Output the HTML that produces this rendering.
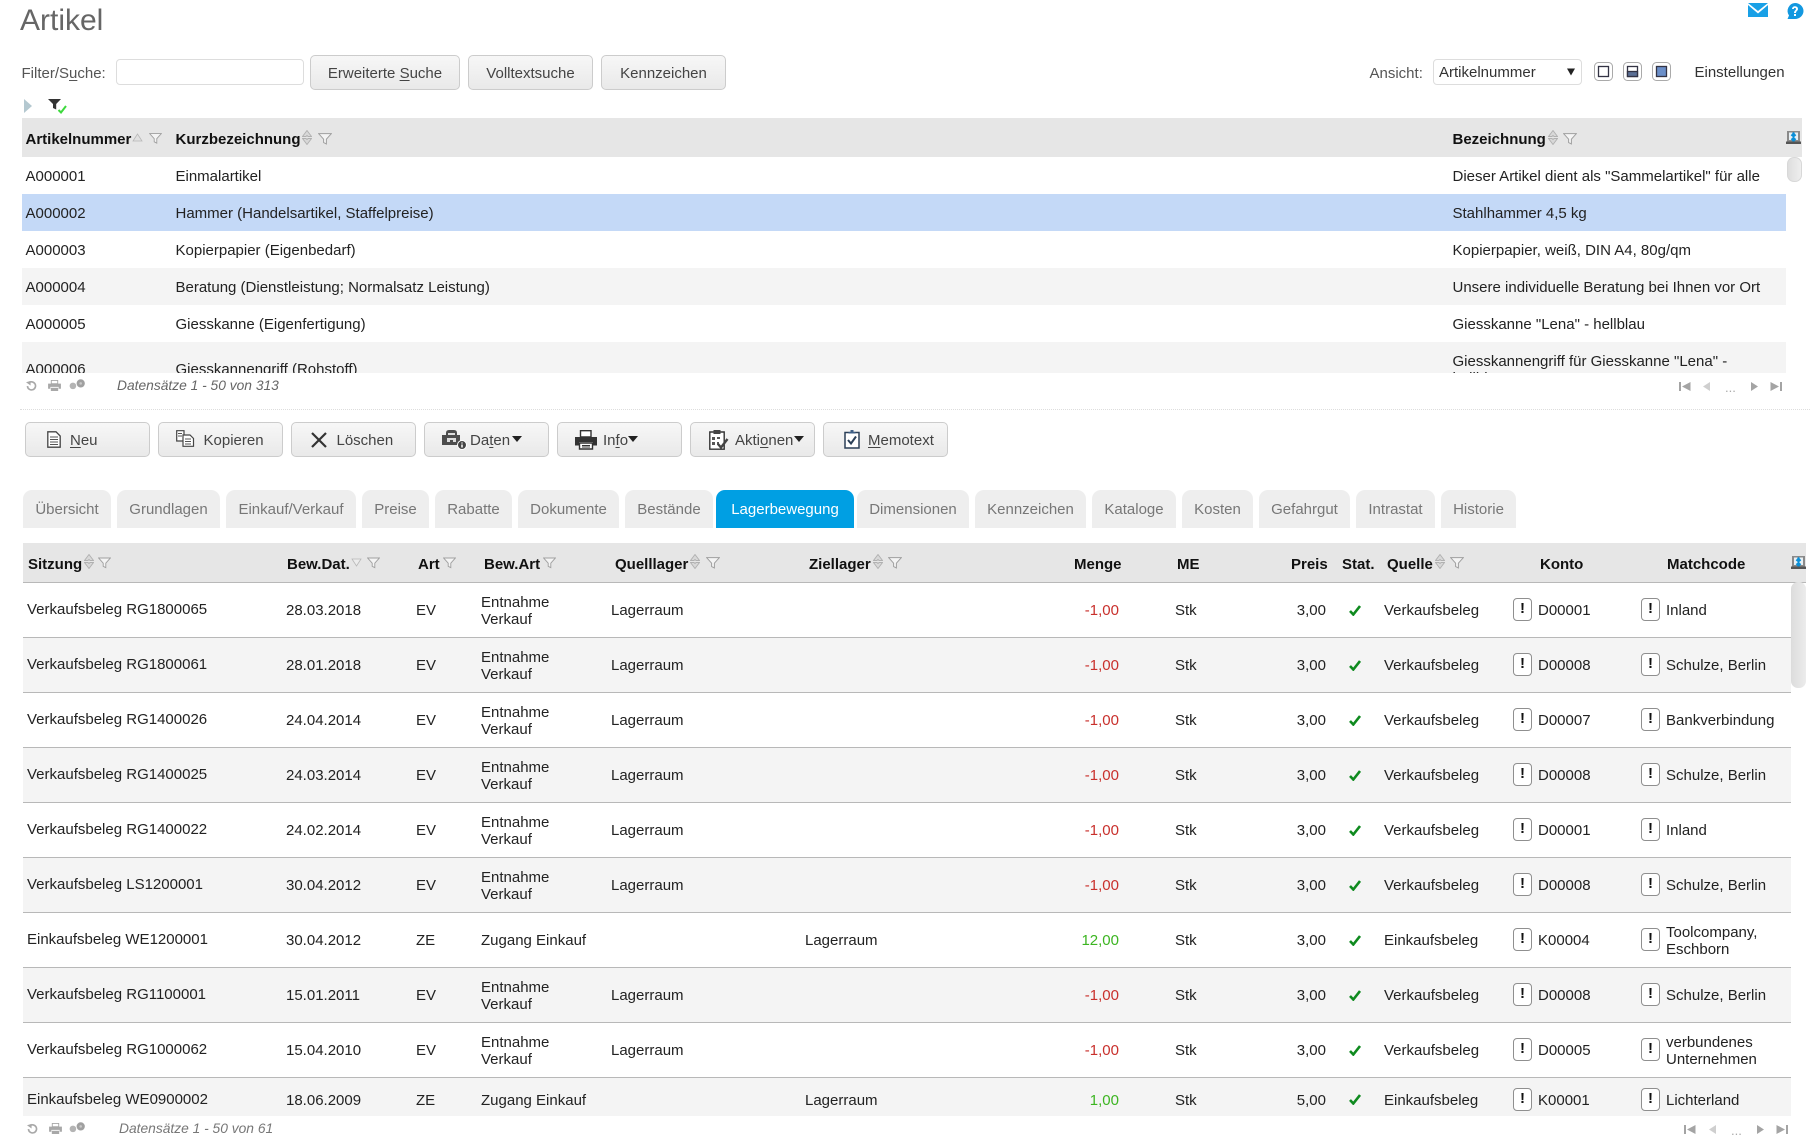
<!DOCTYPE html>
<html lang="de"><head><meta charset="utf-8"><title>Artikel</title>
<style>
*{box-sizing:border-box}
html,body{margin:0;padding:0;background:#fff}
body{width:1814px;height:1147px;position:relative;overflow:hidden;font:15px/17px "Liberation Sans",sans-serif;color:#222}
.a{position:absolute;white-space:nowrap}
svg{position:absolute;overflow:visible}
.btn{position:absolute;border:1px solid #ccc;border-radius:5px;background:linear-gradient(#f7f7f7,#e9e9e9);color:#444;text-align:center;white-space:nowrap}
.top{height:35px;top:55px;line-height:35px}
.b2{top:422px;height:35px;width:125px;line-height:35px;text-align:left}
.b2 span{position:absolute;top:0}
u{text-underline-offset:2px}
#t1{position:absolute;left:22px;top:157px;width:1764px;height:216px;overflow:hidden}
#t1 div.r{position:absolute;left:0;width:1764px;height:37px;line-height:39px}
#t1 span{position:absolute;top:0}
.s1{left:3.5px}.s2{left:153.5px}.s3{left:1430.5px}
.hd{position:absolute;background:#e6e6e6}
.hd b,.hb{position:absolute;color:#111;font-weight:bold;white-space:nowrap}
.tab{position:absolute;top:490px;height:38px;background:#eee;border-radius:9px 9px 0 0;color:#777;line-height:40px;text-align:center;white-space:nowrap}
.on{background:#009fe3;color:#fff}
#t2{position:absolute;left:23px;top:583px;width:1768px;height:533px;overflow:hidden}
.w{position:absolute;left:0;width:1768px;height:55px;border-bottom:1px solid #b8b8b8;line-height:55px}
.g{background:#f4f4f4}
.w>span{position:absolute;top:0;white-space:nowrap}
.w .k{top:-1px;left:4px}.w .d{left:263px}.w .e{left:393px}
.w .f{left:458px;top:11px;line-height:17px}
.w .q{left:588px}.w .z{left:782px}
.w .m{right:672px;color:#c9302c}.w .m.p{color:#3cb521}
.w .u{left:1152px}.w .x{right:465px}
.w .o{left:1361px}.w .l{left:1515px}.w .n{left:1643px}
.w .two{left:1643px;top:11px;line-height:17px}
.w .i,.w .j{top:15px;width:19px;height:23px;border:1px solid #8f8f8f;border-radius:4px;background:#fff;line-height:19px;text-align:center;font-weight:bold;color:#111}
.w .i{left:1490px}.w .j{left:1618px}
.last{height:44px;border:0;line-height:46px}
.last .i,.last .j{top:10px}
.ck{position:absolute;left:1326px;top:22px}
.last .ck{top:16px}
</style></head><body>
<svg width="0" height="0" style="position:absolute"><defs>
<symbol id="so" viewBox="0 0 10 15"><path d="M5 .5L9.5 6.5H6L5 5.5 4 6.5H.5zM.5 8.5H4L5 9.5 6 8.5H9.5L5 14.500z" fill="#d8d8d8" stroke="#b0b0b0" stroke-width=".9"/></symbol>
<symbol id="fi" viewBox="0 0 14 12"><path d="M.6.6H13.4L8.4 6.2V11L5.6 9.6V6.2z" fill="#f4f4f4" stroke="#a0a0a0" stroke-width="1"/></symbol>
<symbol id="st" viewBox="0 0 15 13"><path d="M1 0H14V12H1z" fill="#8a8a8a"/><path d="M3 1.500H12V9H3z" fill="#e8f0f4"/><path d="M7.5 1.500V10M5.500 5L7.500 2.500 9.500 5M5.500 7.500L7.500 10 9.500 7.500" fill="none" stroke="#0a8fd8" stroke-width="2"/><path d="M0 10.500H15V13H0z" fill="#555"/></symbol>
<symbol id="ref" viewBox="0 0 12 12"><path d="M3.2 3A4.4 4.4 0 1 1 1.6 6.6" fill="none" stroke="#a8a8a8" stroke-width="1.8"/><path d="M0 2.5L5 1V6z" fill="#a8a8a8"/></symbol>
<symbol id="pr" viewBox="0 0 14 12"><path d="M3.5.5H10.5V4H3.5z" fill="#fff" stroke="#a8a8a8"/><path d="M0 4H14V9.5H11.5V7.5H2.5V9.5H0z" fill="#a8a8a8"/><path d="M3 8.500H11V12H3z" fill="#a8a8a8"/></symbol>
<symbol id="ge" viewBox="0 0 18 12"><circle cx="4" cy="7.5" r="3.6" fill="#b4b4b4"/><circle cx="12.5" cy="4.8" r="4.5" fill="#a0a0a0"/><circle cx="12.5" cy="4.8" r="1.4" fill="#c8c8c8"/></symbol>
<symbol id="fi1" viewBox="0 0 12 9"><path d="M0 0V9H2V0zM11.5 0L3 4.5 11.5 9z" fill="#a4a4a4"/></symbol>
<symbol id="pv" viewBox="0 0 7 9"><path d="M7 0V9L0 4.5z" fill="#cfcfcf"/></symbol>
<symbol id="nx" viewBox="0 0 7 9"><path d="M0 0V9L7 4.5z" fill="#a4a4a4"/></symbol>
<symbol id="la" viewBox="0 0 12 9"><path d="M10 0V9H12V0zM.5 0L9 4.5.5 9z" fill="#a4a4a4"/></symbol>
<symbol id="ok" viewBox="0 0 12 11"><path d="M1 6L4.3 9.5 11 1" fill="none" stroke="#0f8a1f" stroke-width="2.6"/></symbol>
</defs></svg>

<div class="a" style="left:20px;top:3px;font-size:30px;line-height:36px;color:#666">Artikel</div>
<svg style="left:1748px;top:3px" width="20" height="14" viewBox="0 0 20 14"><path d="M0 0H20L10 8z" fill="#19a0e6"/><path d="M0 2V14H20V2L10 10.5z" fill="#19a0e6"/></svg>
<svg style="left:1785px;top:3px" width="19" height="16" viewBox="0 0 19 16"><path d="M10 0A8.5 8 0 0 1 10 16H2.5L4 12.5A8 8 0 0 1 10 0z" fill="#1398e0"/><path d="M10.2 3.2A2.8 2.8 0 0 1 13 6C13 7.6 11 8 11 10H9C9 7.6 11 7.2 11 6A1 1 0 0 0 8.8 6H7A3 3 0 0 1 10.2 3.2zM9 11H11V13H9z" fill="#fff"/></svg>

<div class="a" style="left:21.5px;top:65px;color:#555">Filter/S<u>u</u>che:</div>
<div class="a" style="left:116px;top:59px;width:188px;height:26px;border:1px solid #ddd;border-radius:4px;background:#fff"></div>
<div class="btn top" style="left:310px;width:150px">Erweiterte <u>S</u>uche</div>
<div class="btn top" style="left:468px;width:125px">Volltextsuche</div>
<div class="btn top" style="left:601px;width:125px">Kennzeichen</div>

<div class="a" style="left:1369.5px;top:65px;color:#555">Ansicht:</div>
<div class="a" style="left:1433px;top:59px;width:149px;height:26px;border:1px solid #ddd;border-radius:4px;line-height:26px;padding-left:5px;color:#333">Artikelnummer</div>
<svg style="left:1567px;top:68px" width="8" height="8" viewBox="0 0 9 8"><path d="M0 0H9L4.500 8z" fill="#222"/></svg>
<svg style="left:1594px;top:62px" width="19" height="19" viewBox="0 0 19 19"><rect x=".5" y=".5" width="18" height="18" rx="4" fill="#fff" stroke="#aaa"/><rect x="4.500" y="4.500" width="10" height="10" fill="#fff" stroke="#334" stroke-width="1.300"/></svg>
<svg style="left:1623px;top:62px" width="19" height="19" viewBox="0 0 19 19"><rect x=".5" y=".5" width="18" height="18" rx="4" fill="#fff" stroke="#aaa"/><rect x="4.500" y="4.500" width="10" height="10" fill="#fff" stroke="#334" stroke-width="1.300"/><rect x="4.500" y="9.500" width="10" height="5" fill="#5b6f95" stroke="#334" stroke-width="1.300"/></svg>
<svg style="left:1652px;top:62px" width="19" height="19" viewBox="0 0 19 19"><rect x=".5" y=".5" width="18" height="18" rx="4" fill="#fff" stroke="#aaa"/><rect x="4.500" y="4.500" width="10" height="10" fill="#6b8fc9" stroke="#334" stroke-width="1.300"/></svg>
<div class="a" style="left:1694.5px;top:64px;color:#333">Einstellungen</div>

<svg style="left:24px;top:99px" width="8" height="14" viewBox="0 0 8 14"><path d="M0 0L8 7 0 14z" fill="#b4c8d0"/></svg>
<svg style="left:48px;top:99px" width="20" height="16" viewBox="0 0 20 16"><path d="M0 0H13L8.200 5V10.500L5 9V5z" fill="#333"/><path d="M10.500 11L13 13.500 18 7" fill="none" stroke="#3dd93d" stroke-width="2"/></svg>

<div class="hd" style="left:22px;top:118px;width:1780px;height:39px"></div>
<div class="hb" style="left:25.5px;top:131px">Artikelnummer</div>
<svg style="left:133px;top:133px" width="9" height="10" viewBox="0 0 9 10"><path d="M4.500 1L9 8H0z" fill="#e0e0e0" stroke="#b8b8b8" stroke-width=".8"/></svg>
<svg style="left:149px;top:133px" width="13" height="11"><use href="#fi"/></svg>
<div class="hb" style="left:175.5px;top:131px">Kurzbezeichnung</div>
<svg style="left:302px;top:130px" width="10" height="15"><use href="#so"/></svg>
<svg style="left:318px;top:133px" width="14" height="12"><use href="#fi"/></svg>
<div class="hb" style="left:1452.5px;top:131px">Bezeichnung</div>
<svg style="left:1548px;top:130px" width="10" height="15"><use href="#so"/></svg>
<svg style="left:1563px;top:133px" width="14" height="12"><use href="#fi"/></svg>
<svg style="left:1786px;top:131px" width="15" height="13"><use href="#st"/></svg>

<div id="t1">
<div class="r" style="top:0"><span class="s1">A000001</span><span class="s2">Einmalartikel</span><span class="s3">Dieser Artikel dient als "Sammelartikel" für alle</span></div>
<div class="r" style="top:37px;background:#c4d9f7"><span class="s1">A000002</span><span class="s2">Hammer (Handelsartikel, Staffelpreise)</span><span class="s3">Stahlhammer 4,5 kg</span></div>
<div class="r" style="top:74px"><span class="s1">A000003</span><span class="s2">Kopierpapier (Eigenbedarf)</span><span class="s3">Kopierpapier, weiß, DIN A4, 80g/qm</span></div>
<div class="r" style="top:111px;background:#f4f4f4"><span class="s1">A000004</span><span class="s2">Beratung (Dienstleistung; Normalsatz Leistung)</span><span class="s3">Unsere individuelle Beratung bei Ihnen vor Ort</span></div>
<div class="r" style="top:148px"><span class="s1">A000005</span><span class="s2">Giesskanne (Eigenfertigung)</span><span class="s3">Giesskanne "Lena" - hellblau</span></div>
<div class="r" style="top:185px;height:53px;line-height:53px;background:#f4f4f4"><span class="s1" style="top:1px">A000006</span><span class="s2" style="top:1px">Giesskannengriff (Rohstoff)</span><span class="s3" style="top:11px;line-height:17px">Giesskannengriff für Giesskanne "Lena" -<br>hellblau</span></div>
</div>
<div style="position:absolute;left:1787px;top:157px;width:15px;height:25px;border-radius:7px;background:linear-gradient(90deg,#dedede,#eeeeee);border:1px solid #d8d8d8"></div>

<svg style="left:26px;top:380px" width="11" height="11"><use href="#ref"/></svg>
<svg style="left:48px;top:380px" width="13" height="11"><use href="#pr"/></svg>
<svg style="left:69px;top:379px" width="17" height="11"><use href="#ge"/></svg>
<div class="a" style="left:117px;top:377px;font-style:italic;color:#666;font-size:13.800px">Datensätze 1 - 50 von 313</div>
<svg style="left:1679px;top:382px" width="12" height="9"><use href="#fi1"/></svg>
<svg style="left:1703px;top:382px" width="7" height="9"><use href="#pv"/></svg>
<div class="a" style="left:1725px;top:379px;color:#aaa;font-size:13px">...</div>
<svg style="left:1751px;top:382px" width="7" height="9"><use href="#nx"/></svg>
<svg style="left:1770px;top:382px" width="12" height="9"><use href="#la"/></svg>

<div style="position:absolute;left:20px;top:409px;width:1790px;border-top:1px dotted #ddd"></div>

<div class="btn b2" style="left:25px"><span style="left:44px"><u>N</u>eu</span>
<svg style="left:21px;top:8px" width="14" height="17" viewBox="0 0 14 17"><path d="M.8.8H9L13.200 5V16.200H.8z" fill="#fff" stroke="#444" stroke-width="1.300"/><path d="M3 6H11M3 8.500H11M3 11H11M3 13.500H11" stroke="#555"/></svg></div>
<div class="btn b2" style="left:158px"><span style="left:44.5px">Kopieren</span>
<svg style="left:17px;top:7px" width="19" height="17" viewBox="0 0 19 17"><path d="M.7.7H8V11H.7z" fill="#fff" stroke="#444" stroke-width="1.200"/><path d="M7 5H14L17.500 8.500V16.300H7z" fill="#fff" stroke="#444" stroke-width="1.200"/><path d="M2 3.500H6M2 6H6M9 9H15M9 11.500H15M9 14H15" stroke="#555"/></svg></div>
<div class="btn b2" style="left:291px"><span style="left:44.5px">Löschen</span>
<svg style="left:19px;top:9px" width="16" height="16" viewBox="0 0 16 16"><path d="M1 1L15 15M15 1L1 15" stroke="#333" stroke-width="2.200"/></svg></div>
<div class="btn b2" style="left:424px"><span style="left:45px">Da<u>t</u>en</span>
<svg style="left:17px;top:7px" width="25" height="20" viewBox="0 0 25 20"><path d="M4 3Q4 0 7 0H12Q15 0 15 3V5H18V15H0V5H4z" fill="#4d4d4d"/><path d="M6 3H13V5H6zM5 8H14V12H11V10H8V12H5z" fill="#ddd"/><circle cx="20" cy="15" r="4.500" fill="#444" stroke="#fff"/><path d="M20 12.500V13.500M20 14.500V17.500" stroke="#fff" stroke-width="1.500"/></svg>
<svg style="left:87px;top:13px" width="10" height="6" viewBox="0 0 10 6"><path d="M0 0H10L5 6z" fill="#222"/></svg></div>
<div class="btn b2" style="left:557px"><span style="left:45px">In<u>f</u>o</span>
<svg style="left:17px;top:7px" width="22" height="20" viewBox="0 0 22 20"><path d="M5.500 .7H16V7H5.500z" fill="#fff" stroke="#333" stroke-width="1.400"/><path d="M0 7H22V15.500H18V12H4V15.500H0z" fill="#333"/><path d="M4.500 13H17.500V19H4.500z" fill="#fff" stroke="#333" stroke-width="1.400"/><path d="M7 15.500H15M7 17H15" stroke="#333"/></svg>
<svg style="left:70px;top:13px" width="10" height="6" viewBox="0 0 10 6"><path d="M0 0H10L5 6z" fill="#222"/></svg></div>
<div class="btn b2" style="left:690px"><span style="left:44px">Akti<u>o</u>nen</span>
<svg style="left:18px;top:6px" width="20" height="21" viewBox="0 0 20 21"><path d="M.8 3H15.200V20.200H.8z" fill="#fff" stroke="#333" stroke-width="1.400"/><path d="M4.500 1H11.500V5H4.500z" fill="#444"/><path d="M3 8H6V11H3zM3 13H6V16H3zM8 8H11V10H8zM8 13H10V16H8z" fill="#555"/><path d="M9 15L12 18.500 18.500 10" fill="none" stroke="#444" stroke-width="2.400"/></svg>
<svg style="left:103px;top:13px" width="10" height="6" viewBox="0 0 10 6"><path d="M0 0H10L5 6z" fill="#222"/></svg></div>
<div class="btn b2" style="left:823px"><span style="left:44px"><u>M</u>emotext</span>
<svg style="left:20px;top:6px" width="16" height="20" viewBox="0 0 16 20"><path d="M1 3.500H15V19H1z" fill="#fff" stroke="#2b3f57" stroke-width="1.500"/><path d="M4.500 4.500V3H6.500V1H9.500V3H11.500V4.500z" fill="#3f5f86"/><path d="M4 11L7 14.500 12 7.500" fill="none" stroke="#2b3f57" stroke-width="2"/></svg></div>

<div class="tab" style="left:23px;width:88px">Übersicht</div>
<div class="tab" style="left:117px;width:103px">Grundlagen</div>
<div class="tab" style="left:226px;width:130px">Einkauf/Verkauf</div>
<div class="tab" style="left:362px;width:67px">Preise</div>
<div class="tab" style="left:435px;width:77px">Rabatte</div>
<div class="tab" style="left:518px;width:101px">Dokumente</div>
<div class="tab" style="left:625px;width:88px">Bestände</div>
<div class="tab on" style="left:716px;width:138px">Lagerbewegung</div>
<div class="tab" style="left:857px;width:112px">Dimensionen</div>
<div class="tab" style="left:975px;width:111px">Kennzeichen</div>
<div class="tab" style="left:1092px;width:84px">Kataloge</div>
<div class="tab" style="left:1182px;width:71px">Kosten</div>
<div class="tab" style="left:1259px;width:91px">Gefahrgut</div>
<div class="tab" style="left:1356px;width:79px">Intrastat</div>
<div class="tab" style="left:1441px;width:75px">Historie</div>

<div class="hd" style="left:23px;top:543px;width:1783px;height:40px;border-bottom:1px solid #b8b8b8"></div>
<div class="hb" style="left:28px;top:556px">Sitzung</div>
<svg style="left:84px;top:554px" width="10" height="15"><use href="#so"/></svg>
<svg style="left:98px;top:557px" width="13" height="12"><use href="#fi"/></svg>
<div class="hb" style="left:287px;top:556px">Bew.Dat.</div>
<svg style="left:352px;top:558px" width="9" height="9" viewBox="0 0 9 9"><path d="M0 1H9L4.500 8z" fill="#ececec" stroke="#b8b8b8" stroke-width=".8"/></svg>
<svg style="left:367px;top:557px" width="13" height="12"><use href="#fi"/></svg>
<div class="hb" style="left:418px;top:556px">Art</div>
<svg style="left:443px;top:557px" width="13" height="12"><use href="#fi"/></svg>
<div class="hb" style="left:484px;top:556px">Bew.Art</div>
<svg style="left:543px;top:557px" width="13" height="12"><use href="#fi"/></svg>
<div class="hb" style="left:615px;top:556px">Quelllager</div>
<svg style="left:690px;top:554px" width="10" height="15"><use href="#so"/></svg>
<svg style="left:706px;top:557px" width="14" height="12"><use href="#fi"/></svg>
<div class="hb" style="left:809px;top:556px">Ziellager</div>
<svg style="left:873px;top:554px" width="10" height="15"><use href="#so"/></svg>
<svg style="left:888px;top:557px" width="14" height="12"><use href="#fi"/></svg>
<div class="hb" style="left:1074px;top:556px">Menge</div>
<div class="hb" style="left:1177px;top:556px">ME</div>
<div class="hb" style="left:1291px;top:556px">Preis</div>
<div class="hb" style="left:1342px;top:556px">Stat.</div>
<div class="hb" style="left:1387px;top:556px">Quelle</div>
<svg style="left:1435px;top:554px" width="10" height="15"><use href="#so"/></svg>
<svg style="left:1450px;top:557px" width="14" height="12"><use href="#fi"/></svg>
<div class="hb" style="left:1540px;top:556px">Konto</div>
<div class="hb" style="left:1667px;top:556px">Matchcode</div>
<svg style="left:1791px;top:556px" width="15" height="13"><use href="#st"/></svg>

<div id="t2">
<div class="w" style="top:0"><span class="k">Verkaufsbeleg RG1800065</span><span class="d">28.03.2018</span><span class="e">EV</span><span class="f">Entnahme<br>Verkauf</span><span class="q">Lagerraum</span><span class="m">-1,00</span><span class="u">Stk</span><span class="x">3,00</span><svg class="ck" width="12" height="11"><use href="#ok"/></svg><span class="o">Verkaufsbeleg</span><span class="i">!</span><span class="l">D00001</span><span class="j">!</span><span class="n">Inland</span></div>
<div class="w g" style="top:55px"><span class="k">Verkaufsbeleg RG1800061</span><span class="d">28.01.2018</span><span class="e">EV</span><span class="f">Entnahme<br>Verkauf</span><span class="q">Lagerraum</span><span class="m">-1,00</span><span class="u">Stk</span><span class="x">3,00</span><svg class="ck" width="12" height="11"><use href="#ok"/></svg><span class="o">Verkaufsbeleg</span><span class="i">!</span><span class="l">D00008</span><span class="j">!</span><span class="n">Schulze, Berlin</span></div>
<div class="w" style="top:110px"><span class="k">Verkaufsbeleg RG1400026</span><span class="d">24.04.2014</span><span class="e">EV</span><span class="f">Entnahme<br>Verkauf</span><span class="q">Lagerraum</span><span class="m">-1,00</span><span class="u">Stk</span><span class="x">3,00</span><svg class="ck" width="12" height="11"><use href="#ok"/></svg><span class="o">Verkaufsbeleg</span><span class="i">!</span><span class="l">D00007</span><span class="j">!</span><span class="n">Bankverbindung</span></div>
<div class="w g" style="top:165px"><span class="k">Verkaufsbeleg RG1400025</span><span class="d">24.03.2014</span><span class="e">EV</span><span class="f">Entnahme<br>Verkauf</span><span class="q">Lagerraum</span><span class="m">-1,00</span><span class="u">Stk</span><span class="x">3,00</span><svg class="ck" width="12" height="11"><use href="#ok"/></svg><span class="o">Verkaufsbeleg</span><span class="i">!</span><span class="l">D00008</span><span class="j">!</span><span class="n">Schulze, Berlin</span></div>
<div class="w" style="top:220px"><span class="k">Verkaufsbeleg RG1400022</span><span class="d">24.02.2014</span><span class="e">EV</span><span class="f">Entnahme<br>Verkauf</span><span class="q">Lagerraum</span><span class="m">-1,00</span><span class="u">Stk</span><span class="x">3,00</span><svg class="ck" width="12" height="11"><use href="#ok"/></svg><span class="o">Verkaufsbeleg</span><span class="i">!</span><span class="l">D00001</span><span class="j">!</span><span class="n">Inland</span></div>
<div class="w g" style="top:275px"><span class="k">Verkaufsbeleg LS1200001</span><span class="d">30.04.2012</span><span class="e">EV</span><span class="f">Entnahme<br>Verkauf</span><span class="q">Lagerraum</span><span class="m">-1,00</span><span class="u">Stk</span><span class="x">3,00</span><svg class="ck" width="12" height="11"><use href="#ok"/></svg><span class="o">Verkaufsbeleg</span><span class="i">!</span><span class="l">D00008</span><span class="j">!</span><span class="n">Schulze, Berlin</span></div>
<div class="w" style="top:330px"><span class="k">Einkaufsbeleg WE1200001</span><span class="d">30.04.2012</span><span class="e">ZE</span><span style="left:458px">Zugang Einkauf</span><span class="z">Lagerraum</span><span class="m p">12,00</span><span class="u">Stk</span><span class="x">3,00</span><svg class="ck" width="12" height="11"><use href="#ok"/></svg><span class="o">Einkaufsbeleg</span><span class="i">!</span><span class="l">K00004</span><span class="j">!</span><span class="two">Toolcompany,<br>Eschborn</span></div>
<div class="w g" style="top:385px"><span class="k">Verkaufsbeleg RG1100001</span><span class="d">15.01.2011</span><span class="e">EV</span><span class="f">Entnahme<br>Verkauf</span><span class="q">Lagerraum</span><span class="m">-1,00</span><span class="u">Stk</span><span class="x">3,00</span><svg class="ck" width="12" height="11"><use href="#ok"/></svg><span class="o">Verkaufsbeleg</span><span class="i">!</span><span class="l">D00008</span><span class="j">!</span><span class="n">Schulze, Berlin</span></div>
<div class="w" style="top:440px"><span class="k">Verkaufsbeleg RG1000062</span><span class="d">15.04.2010</span><span class="e">EV</span><span class="f">Entnahme<br>Verkauf</span><span class="q">Lagerraum</span><span class="m">-1,00</span><span class="u">Stk</span><span class="x">3,00</span><svg class="ck" width="12" height="11"><use href="#ok"/></svg><span class="o">Verkaufsbeleg</span><span class="i">!</span><span class="l">D00005</span><span class="j">!</span><span class="two">verbundenes<br>Unternehmen</span></div>
<div class="w g last" style="top:495px"><span class="k">Einkaufsbeleg WE0900002</span><span class="d">18.06.2009</span><span class="e">ZE</span><span style="left:458px">Zugang Einkauf</span><span class="z">Lagerraum</span><span class="m p">1,00</span><span class="u">Stk</span><span class="x">5,00</span><svg class="ck" width="12" height="11"><use href="#ok"/></svg><span class="o">Einkaufsbeleg</span><span class="i">!</span><span class="l">K00001</span><span class="j">!</span><span class="n">Lichterland</span></div>
</div>
<div style="position:absolute;left:1791px;top:582px;width:15px;height:106px;border-radius:7px;background:linear-gradient(90deg,#dcdcdc,#ececec)"></div>

<svg style="left:27px;top:1123px" width="11" height="11"><use href="#ref"/></svg>
<svg style="left:49px;top:1123px" width="13" height="11"><use href="#pr"/></svg>
<svg style="left:69px;top:1122px" width="17" height="11"><use href="#ge"/></svg>
<div class="a" style="left:119px;top:1120px;font-style:italic;color:#777;font-size:13.800px">Datensätze 1 - 50 von 61</div>
<svg style="left:1684px;top:1125px" width="12" height="9"><use href="#fi1"/></svg>
<svg style="left:1709px;top:1125px" width="7" height="9"><use href="#pv"/></svg>
<div class="a" style="left:1731px;top:1122px;color:#aaa;font-size:13px">...</div>
<svg style="left:1757px;top:1125px" width="7" height="9"><use href="#nx"/></svg>
<svg style="left:1776px;top:1125px" width="12" height="9"><use href="#la"/></svg>
</body></html>
